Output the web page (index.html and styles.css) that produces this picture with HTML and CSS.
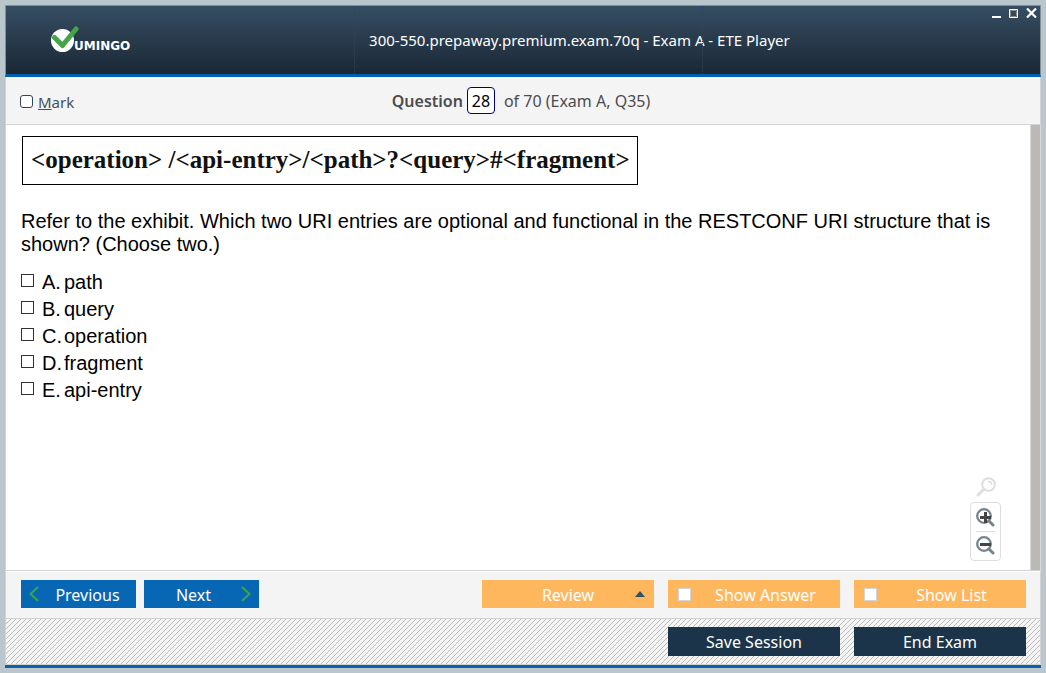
FILE: index.html
```html
<!DOCTYPE html>
<html lang="en">
<head>
<meta charset="utf-8">
<title>300-550.prepaway.premium.exam.70q - Exam A - ETE Player</title>
<link rel="stylesheet" href="styles.css">
</head>
<body>
<div class="window">
  <header class="titlebar">
    <div class="brand">
      <svg class="brand-mark" width="28" height="27" viewBox="0 0 28 27" aria-hidden="true">
        <circle cx="11.500" cy="14.500" r="11.500" fill="#fff"/>
        <path d="M3.500 11.500L11.500 19.500L25 3" fill="none" stroke="#43a547" stroke-width="5" stroke-linecap="round" stroke-linejoin="round"/>
      </svg>
      <span class="brand-name">UMINGO</span>
    </div>
    <h1 class="title">300-550.prepaway.premium.exam.70q - Exam A - ETE Player</h1>
    <div class="window-controls">
      <button class="window-button" type="button" aria-label="Minimize"><svg width="9" height="10" viewBox="0 0 9 10"><path d="M0 8h9v2H0z" fill="#fff"/></svg></button>
      <button class="window-button" type="button" aria-label="Maximize"><svg width="9" height="10" viewBox="0 0 9 10"><path d="M.5 1.500h8v8h-8z" fill="none" stroke="#fff"/><path d="M1.500 2.500h6v6h-6z" fill="none" stroke="#8b8682"/></svg></button>
      <button class="window-button" type="button" aria-label="Close"><svg width="11" height="10" viewBox="0 0 11 10"><path d="M1 .5l9 9M10 .5l-9 9" fill="none" stroke="#fff" stroke-width="2.200"/></svg></button>
    </div>
  </header>

  <div class="question-bar">
    <label class="mark"><input class="mark-box" type="checkbox"><span><u>M</u>ark</span></label>
    <div class="position">
      <label class="position-label" for="number">Question</label>
      <input class="position-input" id="number" type="text" value="28">
      <span>of 70 (Exam A, Q35)</span>
    </div>
  </div>

  <main class="content">
    <div class="page">
      <div class="exhibit">&lt;operation&gt; /&lt;api-entry&gt;/&lt;path&gt;?&lt;query&gt;#&lt;fragment&gt;</div>
      <p class="question">Refer to the exhibit. Which two URI entries are optional and functional in the RESTCONF URI structure that is shown? (Choose two.)</p>
      <div class="options">
        <label class="option"><input class="option-box" type="checkbox"><span class="letter">A.</span><span>path</span></label>
        <label class="option"><input class="option-box" type="checkbox"><span class="letter">B.</span><span>query</span></label>
        <label class="option"><input class="option-box" type="checkbox"><span class="letter">C.</span><span>operation</span></label>
        <label class="option"><input class="option-box" type="checkbox"><span class="letter">D.</span><span>fragment</span></label>
        <label class="option"><input class="option-box" type="checkbox"><span class="letter">E.</span><span>api-entry</span></label>
      </div>
    </div>
    <div class="scrollbar"></div>
    <div class="zoom">
      <button class="zoom-button" type="button" aria-label="Reset zoom"><svg width="20" height="20" viewBox="0 0 20 20"><circle cx="12.500" cy="7.500" r="6.300" fill="none" stroke="#dedede" stroke-width="2"/><path d="M12 4.200a3.800 3.800 0 0 1 3.800 3.600" fill="none" stroke="#dedede" stroke-width="1.400"/><path d="M7.800 12.200L2 18" stroke="#dedede" stroke-width="3" stroke-linecap="round"/></svg></button>
      <div class="zoom-panel">
        <button class="zoom-button" type="button" aria-label="Zoom in"><svg width="19" height="19" viewBox="0 0 19 19"><circle cx="8" cy="8" r="6.800" fill="none" stroke="#74848f" stroke-width="2.300"/><path d="M13 13L17 17" stroke="#74848f" stroke-width="3" stroke-linecap="round"/><path d="M4 9.500h11M9.500 4v11" stroke="#454545" stroke-width="3"/></svg></button>
        <button class="zoom-button zoom-out" type="button" aria-label="Zoom out"><svg width="19" height="19" viewBox="0 0 19 19"><circle cx="8" cy="8" r="6.800" fill="none" stroke="#74848f" stroke-width="2.300"/><path d="M13 13L17 17" stroke="#74848f" stroke-width="3" stroke-linecap="round"/><path d="M4 8.500h11" stroke="#454545" stroke-width="3"/></svg></button>
      </div>
    </div>
  </main>

  <div class="toolbar">
    <button class="button nav previous" type="button"><svg width="10" height="16" viewBox="0 0 10 16"><path d="M9 1L1.500 8L9 15" fill="none" stroke="#3ba548" stroke-width="2"/></svg><span>Previous</span></button>
    <button class="button nav next" type="button"><span>Next</span><svg width="10" height="16" viewBox="0 0 10 16"><path d="M1 1L8.500 8L1 15" fill="none" stroke="#3ba548" stroke-width="2"/></svg></button>
    <div class="actions">
      <button class="button option-button review" type="button"><span>Review</span><svg width="10" height="6" viewBox="0 0 10 6"><path d="M0 6L5 0L10 6z" fill="#30506a"/></svg></button>
      <label class="button option-button"><input class="toggle-box" type="checkbox"><span>Show Answer</span></label>
      <label class="button option-button"><input class="toggle-box" type="checkbox"><span>Show List</span></label>
    </div>
  </div>

  <footer class="footer">
    <button class="button session" type="button">Save Session</button>
    <button class="button session" type="button">End Exam</button>
  </footer>
</div>
</body>
</html>
```
FILE: styles.css
```css
* {
  box-sizing: border-box;
}

body {
  margin: 0;
  min-height: 100vh;
  display: flex;
  padding: 5px;
  background: #b9c6cc;
  font-family: "Noto Sans", "Open Sans", sans-serif;
  font-size: 15px;
}

button,
input {
  margin: 0;
  padding: 0;
  border: 0;
  font: inherit;
}

input[type="checkbox"] {
  appearance: none;
  flex: none;
  width: 13px;
  height: 13px;
  background: #fff;
}

.window {
  flex: 1;
  min-width: 0;
  display: flex;
  flex-direction: column;
  border-bottom: 3px solid #0860ae;
}

.titlebar {
  display: grid;
  grid-template-columns: minmax(0, 34fr) minmax(0, 34fr) minmax(0, 33fr);
  height: 72px;
  border: 1px solid #7f9196;
  border-bottom: 3px solid #0060b0;
  background: linear-gradient(#364e63, #1a2735);
  color: #fff;
}

.brand {
  display: flex;
  align-items: flex-start;
  padding: 20px 0 0 45px;
}

.brand-mark {
  flex: none;
}

.brand-name {
  margin-left: -5px;
  padding-top: 12px;
  font: bold 12px/16px "DejaVu Sans", sans-serif;
}

.title {
  margin: 0;
  padding: 22px 0 0 14px;
  border-left: 1px dotted #2e3e86;
  font-size: 15px;
  font-weight: 400;
  line-height: 24px;
  white-space: nowrap;
}

.window-controls {
  display: flex;
  justify-content: flex-end;
  align-items: flex-start;
  gap: 8px;
  padding: 2px 3px 0 0;
  border-left: 1px dotted #2e3e86;
}

.window-button,
.zoom-button {
  display: block;
  background: none;
}

.window-button svg,
.zoom-button svg {
  display: block;
}

.question-bar {
  display: grid;
  grid-template-columns: 1fr auto 1fr;
  align-items: center;
  height: 48px;
  padding: 0 18px 0 14px;
  border: solid #d0d2d3;
  border-width: 0 1px 1px;
  background: #f4f4f4;
  color: #4c4c4c;
}

.mark {
  display: flex;
  align-items: center;
  gap: 5px;
  padding-top: 2px;
  color: #41505e;
}

.mark .mark-box {
  border: 1px solid #30475a;
  border-radius: 3px;
}

.position {
  display: flex;
  align-items: center;
  font-size: 16px;
}

.position-label {
  font-weight: 600;
}

.position-input {
  width: 28px;
  height: 27px;
  margin: 0 9px 0 4px;
  border: 1px solid #00007c;
  border-radius: 4px;
  background: #fff;
  color: #000;
  text-align: center;
}

.content {
  position: relative;
  flex: 1;
  display: flex;
  border-left: 1px solid #d0d2d3;
  border-bottom: 1px solid #d0d2d3;
  background: #fff;
}

.page {
  flex: 1;
  padding: 11px 15px;
  color: #000;
  font-family: "Liberation Sans", Arial, sans-serif;
  font-size: 20px;
}

.exhibit {
  width: fit-content;
  margin-left: 1px;
  padding: 9px 7px 11px 8px;
  border: 1px solid #000;
  color: #111;
  font: bold 25px/27px "Liberation Serif", "Times New Roman", serif;
}

.question {
  margin: 25px 0 13px;
  line-height: 23px;
}

.option {
  display: flex;
  align-items: center;
  width: fit-content;
  line-height: 27px;
}

.option .option-box {
  margin-bottom: 4px;
  border: 1px solid #333;
}

.letter {
  width: 22px;
  margin-left: 8px;
}

.scrollbar {
  width: 11px;
  border: solid #d8d8d8;
  border-width: 0 1px;
  background: #bbb9b5;
}

.zoom {
  position: absolute;
  right: 40px;
  bottom: 9px;
  display: flex;
  flex-direction: column;
  align-items: center;
  gap: 5px;
}

.zoom-panel {
  width: 31px;
  padding: 5px;
  border: 1px solid #dedede;
  border-radius: 4px;
  background: #fff;
}

.zoom-out {
  margin-top: 4px;
  padding-top: 4px;
  border-top: 1px solid #dedede;
}

.toolbar {
  display: flex;
  align-items: flex-start;
  gap: 8px;
  height: 48px;
  padding: 8px 14px 0 15px;
  border: solid #d0d2d3;
  border-width: 0 1px 1px;
  border-top: 1px solid #fff;
  background: #f4f4f4;
}

.button {
  display: flex;
  align-items: center;
  height: 28px;
  color: #fff;
  font-size: 16px;
  line-height: 28px;
}

.button span {
  flex: 1;
  padding-top: 2px;
  text-align: center;
}

.nav {
  width: 115px;
  padding: 0 8px;
  background: #0767b5;
}

.previous span {
  padding-left: 8px;
}

.next span {
  padding-right: 6px;
}

.actions {
  display: flex;
  gap: 14px;
  margin-left: auto;
}

.option-button {
  padding-left: 10px;
  width: 172px;
  background: #ffb75e;
}

.review {
  padding: 0 9px 0 19px;
}

.option-button .toggle-box {
  border: 1px solid #d4d4d4;
}

.footer {
  display: flex;
  justify-content: flex-end;
  gap: 14px;
  height: 46px;
  padding: 8px 14px 9px;
  border: 1px solid #d0d2d3;
  border-top: 0;
  background: linear-gradient(135deg, #f4f4f4 43%, #bcbcbc 43% 57%, #f4f4f4 57%) 0 0 / 5px 5px;
}

.session {
  justify-content: center;
  width: 172px;
  height: 29px;
  background: #1b344a;
}
```
